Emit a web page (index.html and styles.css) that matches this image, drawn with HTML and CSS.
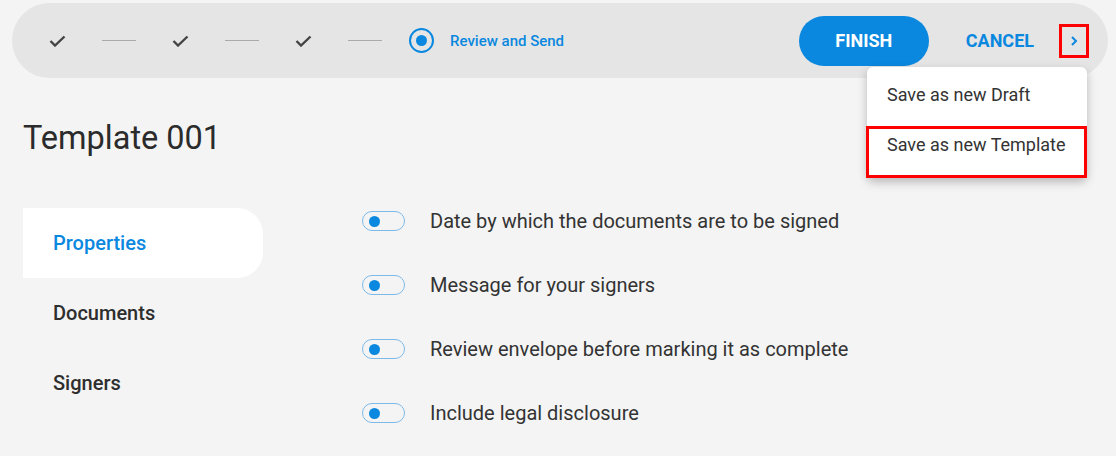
FILE: index.html
```html
<!DOCTYPE html>
<html>
<head>
    <title>Template 001</title>
    <link rel="stylesheet" href="styles.css">
</head>
<body>
    <div class="topbar">
        <div class="steps">
            <svg class="check" width="17" height="12" viewBox="0 0 17 12"><polyline points="1.5,6 6,10.5 15.5,1.5" fill="none" stroke="#444" stroke-width="2.4"/></svg>
            <span class="step-line"></span>
            <svg class="check" width="17" height="12" viewBox="0 0 17 12"><polyline points="1.5,6 6,10.5 15.5,1.5" fill="none" stroke="#444" stroke-width="2.4"/></svg>
            <span class="step-line"></span>
            <svg class="check" width="17" height="12" viewBox="0 0 17 12"><polyline points="1.5,6 6,10.5 15.5,1.5" fill="none" stroke="#444" stroke-width="2.4"/></svg>
            <span class="step-line"></span>
            <span class="step-current"><span class="step-dot"></span></span>
            <span class="step-label">Review and Send</span>
        </div>
        <button class="btn-finish">FINISH</button>
        <button class="btn-cancel">CANCEL</button>
        <button class="btn-more">
            <svg width="8" height="12" viewBox="0 0 8 12"><polyline points="2,2 6,6 2,10" fill="none" stroke="#0a88df" stroke-width="2"/></svg>
        </button>
        <div class="menu">
            <div class="menu-item">Save as new Draft</div>
            <div class="menu-item highlighted">Save as new Template</div>
        </div>
    </div>

    <h1 class="title">Template 001</h1>

    <div class="layout">
        <div class="sidenav">
            <div class="nav-item active">Properties</div>
            <div class="nav-item">Documents</div>
            <div class="nav-item">Signers</div>
        </div>
        <div class="options">
            <div class="option">
                <span class="toggle"><span class="knob"></span></span>
                <span class="option-label">Date by which the documents are to be signed</span>
            </div>
            <div class="option">
                <span class="toggle"><span class="knob"></span></span>
                <span class="option-label">Message for your signers</span>
            </div>
            <div class="option">
                <span class="toggle"><span class="knob"></span></span>
                <span class="option-label">Review envelope before marking it as complete</span>
            </div>
            <div class="option">
                <span class="toggle"><span class="knob"></span></span>
                <span class="option-label">Include legal disclosure</span>
            </div>
        </div>
    </div>
</body>
</html>
```

FILE: styles.css
```css
body {
    margin: 0;
    background: #f4f4f4;
    font-family: Roboto, "Liberation Sans", sans-serif;
    color: #2e2e2e;
}
.topbar {
    position: relative;
    display: flex;
    align-items: center;
    height: 75px;
    margin: 3px 8px 0 12px;
    padding: 0 19px 0 37px;
    background: #e5e5e5;
    border-radius: 38px;
}
.steps {
    display: flex;
    align-items: center;
}
.check {
    display: block;
}
.step-line {
    width: 34px;
    height: 1px;
    margin: 0 36px;
    background: #aaa;
}
.step-current {
    display: flex;
    align-items: center;
    justify-content: center;
    width: 25px;
    height: 25px;
    margin-left: -9px;
    box-sizing: border-box;
    border: 2px solid #0a88df;
    border-radius: 50%;
}
.step-dot {
    width: 11px;
    height: 11px;
    background: #0a88df;
    border-radius: 50%;
}
.step-label {
    margin-left: 16px;
    font-size: 15px;
    font-weight: 500;
    color: #0a88df;
}
button {
    font-family: inherit;
    border: none;
    cursor: pointer;
}
.btn-finish {
    margin-left: auto;
    width: 130px;
    height: 50px;
    border-radius: 25px;
    background: #0a88df;
    color: #fff;
    font-size: 18px;
    font-weight: 700;
}
.btn-cancel {
    margin-left: 37px;
    padding: 0;
    background: none;
    color: #0a88df;
    font-size: 18px;
    font-weight: 700;
}
.btn-more {
    display: flex;
    align-items: center;
    justify-content: center;
    width: 30px;
    height: 34px;
    margin-left: 25px;
    padding: 0;
    box-sizing: border-box;
    border: 3px solid #f00;
    background: none;
}
.menu {
    position: absolute;
    top: 64px;
    right: 21px;
    width: 220px;
    background: #fff;
    border-radius: 6px;
    box-shadow: 0 4px 10px rgba(0, 0, 0, 0.25);
    z-index: 2;
}
.menu-item {
    padding: 16px 20px 19px;
    font-size: 18px;
    line-height: 24px;
    color: #333;
}
.menu-item.highlighted {
    margin-left: -1px;
    padding: 4px 18px 18px;
    border: 3px solid #f00;
}
.title {
    margin: 40px 0 0;
    padding: 0 23px;
    font-size: 32.5px;
    font-weight: 400;
    line-height: 40px;
    color: #2b2b2b;
}
.layout {
    display: flex;
    margin-top: 31px;
}
.sidenav {
    width: 240px;
    margin-left: 23px;
    padding-top: 19px;
}
.nav-item {
    height: 70px;
    line-height: 70px;
    padding-left: 30px;
    font-size: 20px;
    font-weight: 500;
    color: #2e2e2e;
}
.nav-item.active {
    background: #fff;
    border-radius: 0 26px 26px 0;
    color: #0a88df;
}
.options {
    margin-left: 99px;
}
.option {
    display: flex;
    align-items: center;
    height: 64px;
}
.toggle {
    display: flex;
    align-items: center;
    width: 43px;
    height: 20px;
    box-sizing: border-box;
    padding-left: 6px;
    border: 1px solid #7cbaea;
    border-radius: 10px;
}
.knob {
    width: 11px;
    height: 11px;
    background: #0a88df;
    border-radius: 50%;
}
.option-label {
    margin-left: 25px;
    font-size: 20px;
    color: #333;
}
```
